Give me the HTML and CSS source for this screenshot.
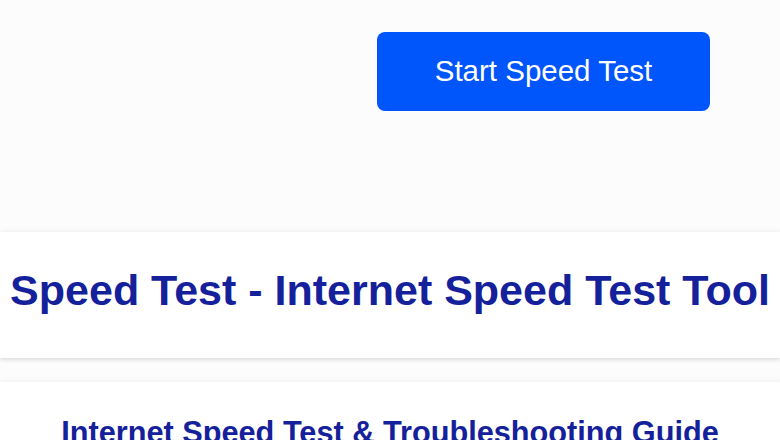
FILE: index.html
```html
<!DOCTYPE html>
<html lang="en">
<head>
<meta charset="utf-8">
<title>Speed Test</title>
<link rel="stylesheet" href="styles.css">
</head>
<body>
  <header class="top">
    <button class="start-btn" type="button">Start Speed Test</button>
  </header>
  <section class="card title-card">
    <h1 class="title">Speed Test - Internet Speed Test Tool</h1>
  </section>
  <section class="card guide-card">
    <h2 class="guide-title">Internet Speed Test &amp; Troubleshooting Guide</h2>
  </section>
</body>
</html>
```

FILE: styles.css
```css
* { box-sizing: border-box; }
html, body { margin: 0; padding: 0; }
body {
  background: #fcfcfc;
  font-family: "Liberation Sans", Arial, sans-serif;
  width: 780px;
  height: 440px;
  overflow: hidden;
}
.top {
  height: 232px;
  display: flex;
  justify-content: flex-end;
  align-items: flex-start;
  padding: 32px 70px 0 0;
}
.start-btn {
  width: 333px;
  height: 79px;
  background: #0055fb;
  color: #ffffff;
  border: none;
  border-radius: 8px;
  font-family: "Liberation Sans", Arial, sans-serif;
  font-size: 29.5px;
  padding: 0 0 2px 0;
}
.card {
  background: #ffffff;
  box-shadow: 0 2px 4px rgba(0,0,0,0.12), 0 -2px 5px rgba(0,0,0,0.03);
}
.title-card {
  height: 126px;
  display: flex;
  align-items: center;
  justify-content: center;
}
.title {
  margin: 0;
  color: #14219a;
  font-size: 43px;
  font-weight: bold;
  white-space: nowrap;
  padding-bottom: 10px;
}
.guide-card {
  margin-top: 24px;
  height: 120px;
  padding-top: 33px;
  text-align: center;
}
.guide-title {
  margin: 0;
  color: #14219a;
  font-size: 30.7px;
  font-weight: bold;
  white-space: nowrap;
}
```
